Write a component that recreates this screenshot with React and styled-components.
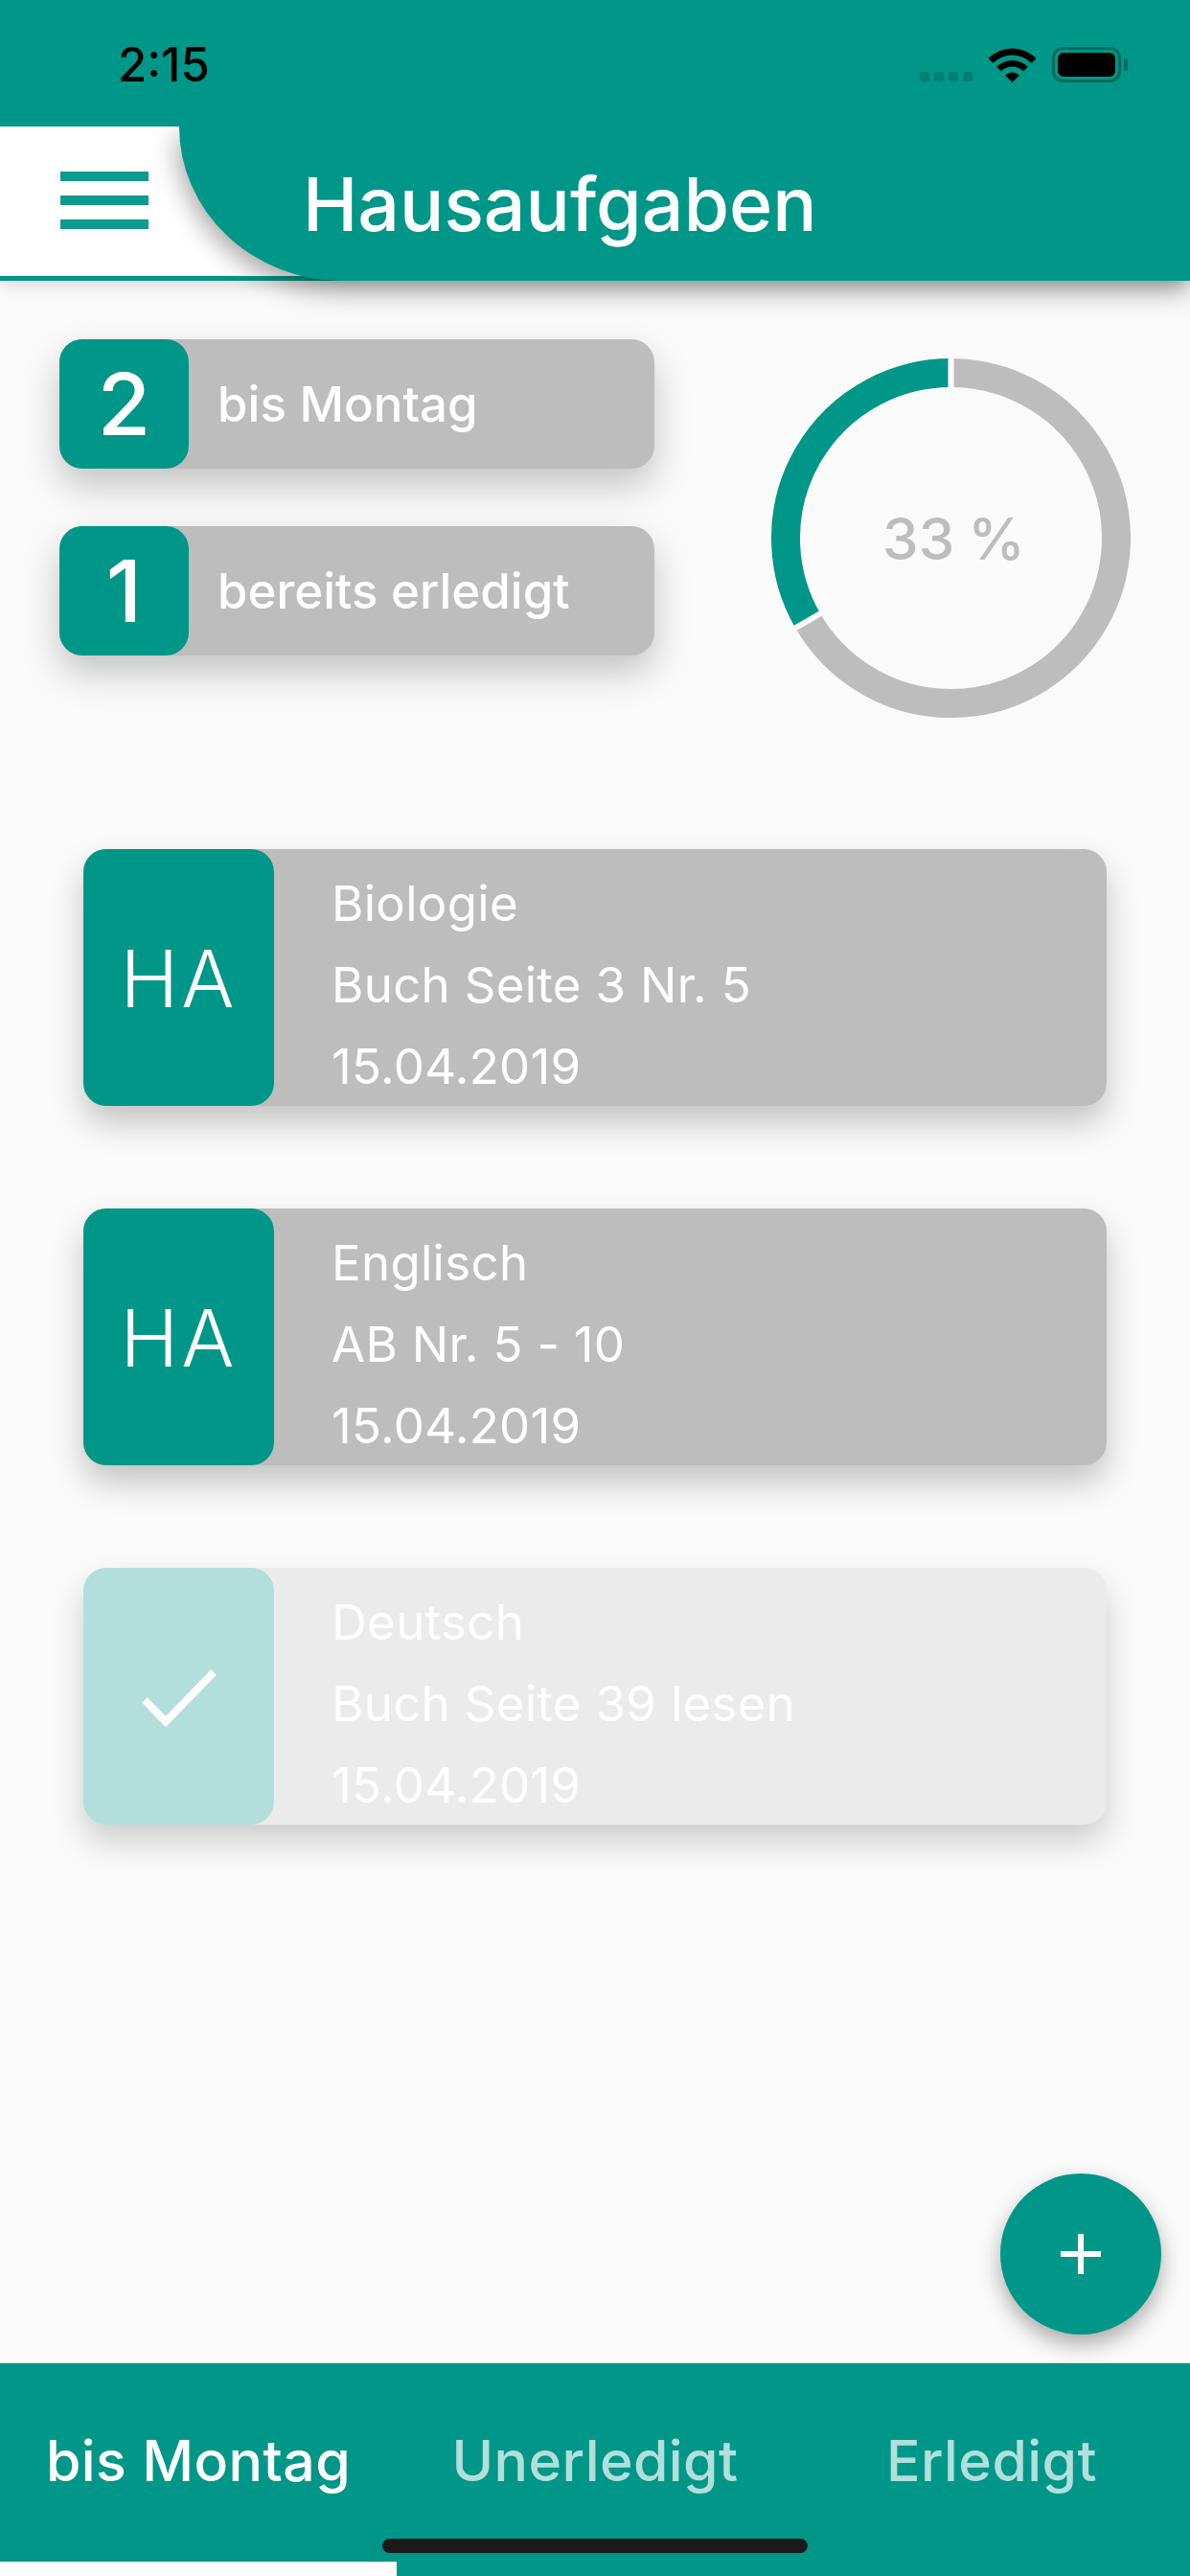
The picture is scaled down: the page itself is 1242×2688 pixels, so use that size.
import React from 'react'
import styled, { createGlobalStyle } from 'styled-components'

const TEAL = '#009688'
const GREY = '#bdbdbd'

const GlobalStyle = createGlobalStyle`
  html, body { margin: 0; padding: 0; background: #fafafa; }
  * { box-sizing: border-box; }
  body { font-family: Inter, "Noto Sans", "Liberation Sans", sans-serif; }
`

const Screen = styled.div`
  position: relative;
  width: 1242px;
  height: 2688px;
  overflow: hidden;
  display: flex;
  flex-direction: column;
  background: #fafafa;
`

const Header = styled.header`
  background: ${TEAL};
  box-shadow: 0 4px 16px rgba(0, 0, 0, 0.14);
  position: relative;
  z-index: 2;
`

const StatusBar = styled.div`
  height: 132px;
  display: flex;
  justify-content: space-between;
  align-items: flex-start;
  padding: 42px 65px 0 123px;
`

const Clock = styled.span`
  font-size: 49px;
  line-height: 52px;
  font-weight: 500;
  color: #000;
`

const StatusIcons = styled.div`
  display: flex;
  align-items: flex-end;
  gap: 17px;
  padding-top: 7px;
`

const TitleRow = styled.div`
  display: flex;
  height: 161px;
  clip-path: inset(0 0 -70px 0);
`

const MenuTab = styled.div`
  width: 320px;
  height: 156px;
  margin-right: -133px;
  background: #fff;
  padding: 47px 0 0 63px;
  flex-shrink: 0;
`

const MenuBars = styled.div`
  width: 92px;
  height: 60px;
  display: flex;
  flex-direction: column;
  justify-content: space-between;
`

const MenuBar = styled.span`
  display: block;
  height: 10px;
  background: ${TEAL};
  opacity: 0.95;
`

const TitlePanel = styled.div`
  flex: 1;
  position: relative;
  background: ${TEAL};
  border-bottom-left-radius: 170px 161px;
  box-shadow: -2px 10px 28px rgba(0, 0, 0, 0.36);
  padding: 36px 0 0 129px;
`

const Title = styled.h1`
  margin: 0;
  font-size: 77px;
  line-height: 90px;
  font-weight: 500;
  color: #fff;
`

const Summary = styled.section`
  display: flex;
  justify-content: space-between;
  padding: 61px 62px 0 62px;
`

const Counters = styled.div`
  display: flex;
  flex-direction: column;
  gap: 60px;
  width: 621px;
`

const Counter = styled.div`
  display: flex;
  align-items: center;
  height: 135px;
  border-radius: 24px;
  background: ${GREY};
  box-shadow: 0 18px 38px rgba(0, 0, 0, 0.22);
`

const CounterNumber = styled.div`
  width: 135px;
  height: 135px;
  border-radius: 24px;
  background: ${TEAL};
  color: #fff;
  display: flex;
  align-items: center;
  justify-content: center;
  font-size: 90px;
  font-weight: 500;
`

const CounterLabel = styled.span`
  margin-left: 30px;
  font-size: 51px;
  font-weight: 500;
  color: #fff;
`

const Donut = styled.div`
  position: relative;
  width: 375px;
  height: 375px;
  margin: 20px 0 0 0;
`

const DonutText = styled.span`
  position: absolute;
  inset: 0;
  padding-left: 6px;
  display: flex;
  align-items: center;
  justify-content: center;
  font-size: 60px;
  font-weight: 500;
  word-spacing: -2px;
  color: ${GREY};
`

const TaskList = styled.section`
  display: flex;
  flex-direction: column;
  gap: 107px;
  padding: 137px 87px 0 87px;
`

const Task = styled.article`
  display: flex;
  height: 268px;
  border-radius: 24px;
  background: ${(p) => (p.$done ? '#ebebeb' : GREY)};
  box-shadow: 0 18px 34px rgba(0, 0, 0, ${(p) => (p.$done ? 0.18 : 0.22)});
`

const TaskBadge = styled.div`
  width: 199px;
  border-radius: 24px;
  background: ${(p) => (p.$done ? '#b2dfdb' : TEAL)};
  color: #fff;
  display: flex;
  align-items: center;
  justify-content: center;
  padding-top: 3px;
  font-size: 82px;
  letter-spacing: 3px;
  font-weight: 300;
`

const TaskLines = styled.div`
  padding: 14px 0 0 60px;
  display: flex;
  flex-direction: column;
`

const TaskLine = styled.span`
  font-size: 51px;
  line-height: 85px;
  letter-spacing: 0.3px;
  font-weight: 400;
  color: ${(p) => (p.$done ? 'rgba(255, 255, 255, 0.95)' : '#fff')};
`

const Fab = styled.button`
  position: absolute;
  left: 1044px;
  top: 2268px;
  width: 168px;
  height: 168px;
  border: 0;
  border-radius: 50%;
  padding: 0;
  background: ${TEAL};
  display: flex;
  align-items: center;
  justify-content: center;
  box-shadow: 0 10px 22px rgba(0, 0, 0, 0.32);
  z-index: 3;
`

const TabBar = styled.nav`
  margin-top: auto;
  position: relative;
  height: 222px;
  background: ${TEAL};
  display: grid;
  grid-template-columns: repeat(3, 1fr);
`

const TabItem = styled.div`
  position: relative;
  text-align: center;
  padding-top: 62px;
  font-size: 59px;
  line-height: 80px;
  letter-spacing: 0.4px;
  font-weight: 500;
  color: ${(p) => (p.$active ? '#fff' : '#b2dfdb')};
  ${(p) =>
    p.$active &&
    `&::after {
      content: '';
      position: absolute;
      left: 0;
      right: 0;
      bottom: 0;
      height: 15px;
      background: #fff;
    }`}
`

const HomeIndicator = styled.div`
  position: absolute;
  left: 399px;
  bottom: 24px;
  width: 444px;
  height: 15px;
  border-radius: 8px;
  background: #1a1a1a;
`

// ring is drawn as two stroked arcs, the gaps come from white separators
const arc = (cx, cy, r, from, to) => {
  const pt = (a) => {
    const rad = ((a - 90) * Math.PI) / 180
    return `${cx + r * Math.cos(rad)} ${cy + r * Math.sin(rad)}`
  }
  const large = Math.abs(to - from) > 180 ? 1 : 0
  return `M ${pt(from)} A ${r} ${r} 0 ${large} 1 ${pt(to)}`
}

const ProgressRing = () => (
  <svg width="375" height="375" viewBox="0 0 375 375">
    <path d={arc(187.5, 187.5, 172.5, 0, 240)} fill="none" stroke={GREY} strokeWidth="30" />
    <path d={arc(187.5, 187.5, 172.5, 240, 360)} fill="none" stroke={TEAL} strokeWidth="30" />
    <rect x="184.5" y="0" width="6" height="32" fill="#fff" />
    <rect x="184.5" y="0" width="6" height="32" fill="#fff" transform="rotate(240 187.5 187.5)" />
  </svg>
)

// one wifi band, a 90 degree wedge around the bottom point
const wifiBand = (outer, inner) => {
  const cx = 24.5
  const cy = 36
  const s = Math.SQRT1_2
  return (
    `M ${cx - outer * s} ${cy - outer * s} A ${outer} ${outer} 0 0 1 ${cx + outer * s} ${cy - outer * s} ` +
    `L ${cx + inner * s} ${cy - inner * s} A ${inner} ${inner} 0 0 0 ${cx - inner * s} ${cy - inner * s} Z`
  )
}

const StatusGlyphs = () => (
  <StatusIcons>
    <svg width="55" height="10" viewBox="0 0 55 10" style={{ marginBottom: 1 }}>
      {[0, 15, 30, 45].map((x) => (
        <rect key={x} x={x} y="0" width="10" height="10" rx="3" fill="#007f72" />
      ))}
    </svg>
    <svg width="49" height="36" viewBox="0 0 49 36">
      <path d={wifiBand(35.5, 28.5)} fill="#000" />
      <path d={wifiBand(23, 16.5)} fill="#000" />
      <path d={wifiBand(10.5, 0)} fill="#000" />
    </svg>
    <svg width="79" height="37" viewBox="0 0 79 37">
      <rect x="1.5" y="1.5" width="69" height="34" rx="10" fill="none" stroke="#006b5f" strokeWidth="3" />
      <rect x="6" y="6" width="60" height="25" rx="6" fill="#000" />
      <path d="M75 12 a6.5 6.5 0 0 1 0 13 Z" fill="#006b5f" />
    </svg>
  </StatusIcons>
)

const tasks = [
  { subject: 'Biologie', text: 'Buch Seite 3 Nr. 5', date: '15.04.2019' },
  { subject: 'Englisch', text: 'AB Nr. 5 - 10', date: '15.04.2019' },
  { subject: 'Deutsch', text: 'Buch Seite 39 lesen', date: '15.04.2019', done: true },
]

export default function App() {
  return (
    <Screen>
      <GlobalStyle />
      <Header>
        <StatusBar>
          <Clock>2:15</Clock>
          <StatusGlyphs />
        </StatusBar>
        <TitleRow>
          <MenuTab>
            <MenuBars>
              <MenuBar />
              <MenuBar />
              <MenuBar />
            </MenuBars>
          </MenuTab>
          <TitlePanel>
            <Title>Hausaufgaben</Title>
          </TitlePanel>
        </TitleRow>
      </Header>

      <Summary>
        <Counters>
          <Counter>
            <CounterNumber>2</CounterNumber>
            <CounterLabel>bis Montag</CounterLabel>
          </Counter>
          <Counter>
            <CounterNumber>1</CounterNumber>
            <CounterLabel>bereits erledigt</CounterLabel>
          </Counter>
        </Counters>
        <Donut>
          <ProgressRing />
          <DonutText>33 %</DonutText>
        </Donut>
      </Summary>

      <TaskList>
        {tasks.map((t) => (
          <Task key={t.subject} $done={t.done}>
            <TaskBadge $done={t.done}>
              {t.done ? (
                <svg width="78" height="60" viewBox="0 0 78 60">
                  <path d="M3 32 L25 54.5 L75 3" fill="none" stroke="#fff" strokeWidth="8" />
                </svg>
              ) : (
                'HA'
              )}
            </TaskBadge>
            <TaskLines>
              <TaskLine $done={t.done}>{t.subject}</TaskLine>
              <TaskLine $done={t.done}>{t.text}</TaskLine>
              <TaskLine $done={t.done}>{t.date}</TaskLine>
            </TaskLines>
          </Task>
        ))}
      </TaskList>

      <Fab aria-label="add">
        <svg width="42" height="42" viewBox="0 0 42 42">
          <path d="M21 0 V42 M0 21 H42" stroke="#fff" strokeWidth="6" />
        </svg>
      </Fab>

      <TabBar>
        <TabItem $active>bis Montag</TabItem>
        <TabItem>Unerledigt</TabItem>
        <TabItem>Erledigt</TabItem>
        <HomeIndicator />
      </TabBar>
    </Screen>
  )
}
